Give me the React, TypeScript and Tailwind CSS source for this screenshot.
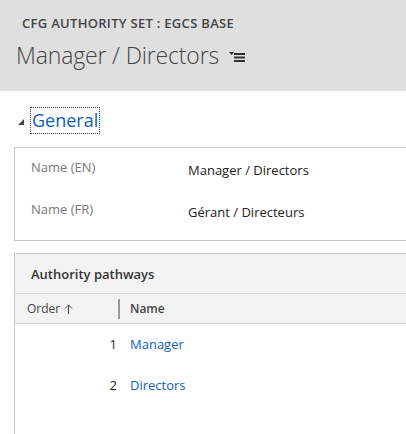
import React from "react";

const font = { fontFamily: '"Segoe UI", "Open Sans", "Noto Sans", sans-serif' };

const FormMenuIcon: React.FC = () => (
  <svg width="16" height="10" viewBox="0 0 16 10" className="text-[#333]">
    <path d="M0 0h5L2.5 3z" fill="currentColor" />
    <rect x="5" y="1" width="11" height="2" fill="currentColor" />
    <rect x="5" y="4.5" width="11" height="2" fill="currentColor" />
    <rect x="5" y="8" width="11" height="2" fill="currentColor" />
  </svg>
);

const fields = [
  { label: "Name (EN)", value: "Manager / Directors" },
  { label: "Name (FR)", value: "Gérant / Directeurs" },
];

const pathways = [
  { order: 1, name: "Manager" },
  { order: 2, name: "Directors" },
];

export default function App() {
  return (
    <div className="w-[406px] h-[434px] overflow-hidden bg-white" style={font}>
      {/* Header */}
      <div className="h-[91px] bg-[#dfdfdf] pl-[22px] pt-[14px]">
        <div className="text-[13px] font-semibold text-[#444] leading-[18px] tracking-[0.3px]">
          CFG AUTHORITY SET : EGCS BASE
        </div>
        <div className="flex items-center mt-[8px] -ml-[6px]">
          <span className="text-[23px] font-light text-[#444] leading-[30px] tracking-[-0.15px]">
            Manager / Directors
          </span>
          <span className="ml-[10px] mt-[4px]">
            <FormMenuIcon />
          </span>
        </div>
      </div>

      {/* General section */}
      <div className="flex items-center mt-[16px] ml-[18px]">
        <span className="w-0 h-0 border-l-[6px] border-l-transparent border-b-[6px] border-b-[#444] mt-[2px]" />
        <span className="ml-[6px] border border-dotted border-[#444] px-[1px] leading-[25px] text-[18px] text-[#1160b7]">
          General
        </span>
      </div>

      <div className="ml-[14px] mt-[13px] border border-r-0 border-[#c8c8c8] h-[94px] pt-[10px]">
        {fields.map((f) => (
          <div key={f.label} className="flex h-[42px] text-[13px]">
            <span className="w-[173px] pl-[16px] text-[#777]">{f.label}</span>
            <span className="pt-[3px] text-[#222]">{f.value}</span>
          </div>
        ))}
      </div>

      {/* Authority pathways subgrid */}
      <div className="ml-[14px] mt-[12px] border-l border-t border-[#c8c8c8] h-[200px]">
        <div className="h-[40px] bg-[#f3f3f3] border-b border-[#d6d6d6] flex items-center pl-[16px] pt-[2px]">
          <span className="text-[13px] font-semibold text-[#333]">Authority pathways</span>
        </div>
        <div className="h-[30px] bg-[#f3f3f3] border-b border-[#d6d6d6] flex items-center text-[12px] text-[#444]">
          <span className="w-[103px] pl-[12px] flex items-center gap-[4px]">
            Order
            <svg width="9" height="10" viewBox="0 0 9 10" className="text-[#444]">
              <path d="M4.5 1v9M1 4.5L4.5 1 8 4.5" fill="none" stroke="currentColor" strokeWidth="1" />
            </svg>
          </span>
          <span className="w-[2px] h-[20px] bg-[#999]" />
          <span className="pl-[10px] font-semibold">Name</span>
        </div>
        {pathways.map((p) => (
          <div key={p.order} className="flex h-[41px] items-center text-[13px] first:mt-[3px]">
            <span className="w-[102px] text-right text-[#222]">{p.order}</span>
            <span className="ml-[13px] text-[#1160b7]">{p.name}</span>
          </div>
        ))}
      </div>
    </div>
  );
}
